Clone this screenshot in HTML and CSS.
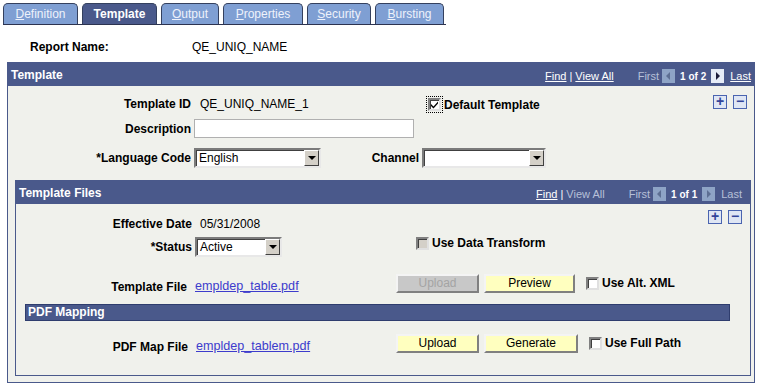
FILE: index.html
```html
<!DOCTYPE html>
<html lang="en">
<head>
    <meta charset="UTF-8">
    <title>Report Definition - Template</title>
    <link rel="stylesheet" href="styles.css">
</head>
<body>
    <!-- tabs -->
    <div class="tabs">
        <a class="tab tab-def"><u>D</u>efinition</a>
        <span class="tab tab-tpl active">Template</span>
        <a class="tab tab-out"><u>O</u>utput</a>
        <a class="tab tab-prop"><u>P</u>roperties</a>
        <a class="tab tab-sec"><u>S</u>ecurity</a>
        <a class="tab tab-burst"><u>B</u>ursting</a>
    </div>

    <div class="report-name">
        <span class="report-lbl">Report Name:</span>
        <span>QE_UNIQ_NAME</span>
    </div>

    <!-- Template scroll area -->
    <div class="box outer">
        <div class="bar">
            <span class="bar-title">Template</span>
            <span class="nav">
                <a class="hdr-link">Find</a><span class="sep">|</span><a class="hdr-link">View All</a>
                <span class="first off">First</span>
                <svg class="nav-ico" width="13" height="14" viewBox="0 0 13 14"><rect x="0" y="0" width="13" height="14" fill="#8ea4c6"/><path d="M8 3 L4 7 L8 11 Z" fill="#5d6f93"/></svg>
                <b class="count">1 of 2</b>
                <svg class="nav-ico" width="13" height="14" viewBox="0 0 13 14"><rect x="0" y="0" width="13" height="14" fill="#e6ecf7"/><path d="M5 3 L9 7 L5 11 Z" fill="#1b1b3a"/></svg>
                <a class="hdr-link">Last</a>
            </span>
        </div>
        <div class="body outer-body">
            <div class="row row-id">
                <span class="lbl">Template ID</span>
                <span class="val fld">QE_UNIQ_NAME_1</span>
                <span class="chk-wrap">
                    <span class="chk checked focus">
                        <svg width="9" height="9" viewBox="0 0 9 9"><path d="M1 4 L3.5 6.5 L8 1.5 L8 3.5 L3.5 8.5 L1 6 Z" fill="#000"/></svg>
                    </span>
                    <b>Default Template</b>
                </span>
                <span class="pm">
                    <span class="pm-btn">+</span><span class="pm-btn">&minus;</span>
                </span>
            </div>
            <div class="row row-desc">
                <span class="lbl">Description</span>
                <span class="input desc"></span>
            </div>
            <div class="row row-lang">
                <span class="lbl">*Language Code</span>
                <span class="select lang"><span class="sel-text">English</span><span class="sel-btn"></span></span>
                <span class="lbl lbl-channel">Channel</span>
                <span class="select channel"><span class="sel-text"></span><span class="sel-btn"></span></span>
            </div>

            <!-- Template Files -->
            <div class="box inner">
                <div class="bar inner-bar">
                    <span class="bar-title">Template Files</span>
                    <span class="nav">
                        <a class="hdr-link">Find</a><span class="sep">|</span><span class="off">View All</span>
                        <span class="first off">First</span>
                        <svg class="nav-ico" width="13" height="14" viewBox="0 0 13 14"><rect x="0" y="0" width="13" height="14" fill="#8ea4c6"/><path d="M8 3 L4 7 L8 11 Z" fill="#5d6f93"/></svg>
                        <b class="count">1 of 1</b>
                        <svg class="nav-ico" width="13" height="14" viewBox="0 0 13 14"><rect x="0" y="0" width="13" height="14" fill="#8ea4c6"/><path d="M5 3 L9 7 L5 11 Z" fill="#5d6f93"/></svg>
                        <span class="off">Last</span>
                    </span>
                </div>
                <div class="body inner-body">
                    <div class="row row-eff">
                        <span class="lbl">Effective Date</span>
                        <span class="val">05/31/2008</span>
                        <span class="pm">
                            <span class="pm-btn">+</span><span class="pm-btn">&minus;</span>
                        </span>
                    </div>
                    <div class="row row-status">
                        <span class="lbl">*Status</span>
                        <span class="select status"><span class="sel-text">Active</span><span class="sel-btn"></span></span>
                        <span class="chk-wrap transform">
                            <span class="chk disabled"></span>
                            <b>Use Data Transform</b>
                        </span>
                    </div>
                    <div class="row row-file">
                        <span class="lbl lbl-file">Template File</span>
                        <a class="link fld-link">empldep_table.pdf</a>
                        <span class="btn btn-off">Upload</span>
                        <span class="btn btn-preview">Preview</span>
                        <span class="chk-wrap">
                            <span class="chk"></span>
                            <b>Use Alt. XML</b>
                        </span>
                    </div>
                    <div class="sub-bar">PDF Mapping</div>
                    <div class="row row-map">
                        <span class="lbl lbl-map">PDF Map File</span>
                        <a class="link fld-link">empldep_tablem.pdf</a>
                        <span class="btn btn-upload">Upload</span>
                        <span class="btn btn-generate">Generate</span>
                        <span class="chk-wrap">
                            <span class="chk"></span>
                            <b>Use Full Path</b>
                        </span>
                    </div>
                </div>
            </div>
        </div>
    </div>
</body>
</html>
```

FILE: styles.css
```css
body {
    margin: 0;
    padding: 3px 0 0 3px;
    font-family: "Liberation Sans", Arial, sans-serif;
    font-size: 12px;
    color: #000;
    background: #fff;
}
/* tabs */
.tabs {
    display: flex;
    gap: 4px;
    width: 443px;
    height: 21px;
    border-bottom: 1px solid #2c3350;
}
.tab {
    box-sizing: border-box;
    height: 21px;
    line-height: 21px;
    text-align: center;
    background: #7f9fd3;
    color: #eef2fb;
    border: 1px solid #34405e;
    border-bottom: none;
    border-radius: 5px 5px 0 0;
}
.tab-def { width: 75px; }
.tab-tpl { width: 75px; }
.tab-out { width: 58px; }
.tab-prop { width: 80px; }
.tab-sec { width: 64px; }
.tab-burst { width: 69px; }
.tab.active {
    background: #4a598b;
    color: #fff;
    font-weight: bold;
}
.report-name {
    display: flex;
    padding: 15px 0 0 27px;
    height: 20px;
}
.report-lbl {
    width: 162px;
    font-weight: bold;
}
/* scroll boxes */
.box {
    border: 1px solid #4a598b;
    background: #f0f1ec;
}
.outer {
    margin: 2px 0 0 4px;
    width: 748px;
    height: 321px;
    box-sizing: border-box;
}
.bar {
    display: flex;
    justify-content: space-between;
    align-items: center;
    height: 23px;
    background: #4a598b;
    color: #fff;
    padding: 0 3px 0 3px;
}
.bar-title {
    font-weight: bold;
}
.nav {
    display: flex;
    align-items: center;
    padding-top: 2px;
    font-size: 11px;
}
.hdr-link {
    color: #fff;
    text-decoration: underline;
}
.sep {
    margin: 0 3px 0 3px;
}
.off {
    color: #b7c0d8;
}
.first {
    margin-left: 24px;
    margin-right: 3px;
}
.nav-ico {
    display: block;
}
.count {
    font-size: 10px;
    margin: 0 5px 0 5px;
    padding-top: 2px;
}
.nav-ico + .hdr-link,
.nav-ico + .off {
    margin-left: 6px;
}
.outer-body {
    padding: 6px 2px 0 7px;
}
.row {
    display: flex;
    align-items: center;
}
.lbl {
    font-weight: bold;
    text-align: right;
    flex-shrink: 0;
}
.outer-body .lbl {
    width: 176px;
}
.val {
    margin-left: 9px;
}
.fld {
    width: 228px;
}
.row-id {
    height: 24px;
}
.row-desc {
    height: 25px;
}
.row-lang {
    height: 27px;
    margin-top: 3px;
}
.input {
    height: 17px;
    border: 1px solid #b0b0b0;
    background: #fff;
    margin-left: 3px;
}
.desc {
    width: 218px;
}
/* select look */
.select {
    display: flex;
    height: 16px;
    margin-left: 3px;
    background: #fff;
    border: 2px solid;
    border-color: #7b7b7b #e8e8e8 #e8e8e8 #7b7b7b;
    box-shadow: inset 1px 1px 0 #404040;
}
.sel-text {
    flex: 1;
    padding: 1px 0 0 3px;
    line-height: 14px;
}
.sel-btn {
    width: 13px;
    height: 14px;
    background: #d4d0c8;
    border: 1px solid;
    border-color: #fff #404040 #404040 #fff;
    position: relative;
}
.sel-btn::after {
    content: "";
    position: absolute;
    left: 3px;
    top: 5px;
    border-left: 4px solid transparent;
    border-right: 4px solid transparent;
    border-top: 4px solid #000;
}
.lang {
    width: 123px;
}
.outer-body .lbl-channel {
    width: 98px;
}
.channel {
    width: 120px;
}
/* checkbox */
.chk-wrap {
    display: flex;
    align-items: center;
    gap: 3px;
}
.row-id .chk-wrap {
    padding-top: 1px;
}
.chk {
    display: flex;
    align-items: center;
    justify-content: center;
    width: 9px;
    height: 9px;
    background: #fff;
    border: 2px solid;
    border-color: #808080 #e0e0e0 #e0e0e0 #808080;
    box-shadow: inset 1px 1px 0 #404040;
}
.chk.focus {
    outline: 1px dotted #000;
    outline-offset: 1px;
}
.chk.disabled {
    background: #d4d0c8;
}
/* +/- buttons */
.pm {
    display: flex;
    gap: 6px;
    margin-left: auto;
    align-self: flex-start;
}
.pm-btn {
    width: 12px;
    height: 12px;
    line-height: 11px;
    text-align: center;
    border: 1px solid #4a64b0;
    background: #dfe6f4;
    color: #32449a;
    font-weight: bold;
    font-size: 14px;
}
.row-id .pm {
    margin-top: 3px;
    margin-right: 5px;
}
/* inner scroll */
.inner {
    margin: 9px 0 0 0;
    width: 736px;
    height: 196px;
    box-sizing: border-box;
}
.inner-bar {
    padding: 0 8px 0 3px;
}
.inner-body {
    padding: 9px 0 0 0;
}
.inner-body .lbl {
    width: 176px;
}
.inner-body .lbl-file {
    width: 171px;
}
.inner-body .lbl-map {
    width: 172px;
}
.row-eff {
    height: 21px;
}
.row-eff .val {
    margin-left: 8px;
}
.row-eff .pm {
    margin-top: -3px;
    margin-right: 8px;
}
.row-status {
    height: 22px;
    margin-top: 2px;
}
.status {
    width: 83px;
}
.transform {
    margin-left: 134px;
    align-self: flex-start;
}
.row-file,
.row-map {
    height: 22px;
    align-items: flex-end;
}
.row-file {
    margin-top: 14px;
}
.link {
    color: #3d3ccc;
    font-size: 12.6px;
    text-decoration: underline;
    margin-left: 8px;
    padding-bottom: 1px;
}
.fld-link {
    width: 201px;
}
.row-map .fld-link {
    width: 200px;
    margin-left: 8px;
}
.btn {
    height: 15px;
    line-height: 15px;
    text-align: center;
    background: #ffffbf;
    border: 2px solid;
    border-color: #f4f4f4 #808080 #808080 #f4f4f4;
    align-self: center;
}
.btn-off {
    width: 79px;
    background: #c8c8c8;
    color: #a4a4a4;
}
.btn-preview {
    width: 87px;
    margin-left: 5px;
}
.btn-upload {
    width: 79px;
}
.btn-generate {
    width: 90px;
    margin-left: 5px;
}
.row-file .chk-wrap,
.row-map .chk-wrap {
    margin-left: 11px;
    align-self: center;
}
.sub-bar {
    margin: 10px 20px 0 9px;
    height: 15px;
    line-height: 15px;
    padding-left: 2px;
    background: #4a598b;
    border: 1px solid #2f3d6e;
    color: #fff;
    font-weight: bold;
}
.row-map {
    margin-top: 11px;
}
```
